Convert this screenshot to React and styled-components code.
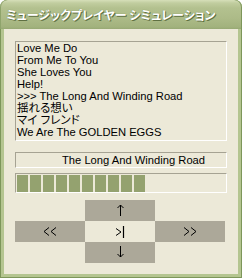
import React from "react";
import styled, { createGlobalStyle } from "styled-components";

const Global = createGlobalStyle`
  html, body { margin: 0; padding: 0; background: #ffffff; }
  body { width: 242px; height: 278px; overflow: hidden; }
`;

const Window = styled.div`
  width: 242px;
  height: 278px;
  box-sizing: border-box;
  display: flex;
  flex-direction: column;
  border-radius: 7px 7px 0 0;
  overflow: hidden;
  background: #93ab6c;
  padding: 0 1px 1px 1px;
  box-shadow: inset 0 0 0 1px #7d965a;
`;

const TitleBar = styled.div`
  height: 29px;
  flex: none;
  display: flex;
  align-items: center;
  padding-left: 6px;
  margin: 0 -1px;
  border-radius: 7px 7px 0 0;
  background: linear-gradient(
    to bottom,
    #d6dfb9 0px,
    #c1cd9f 3px,
    #b3c18f 8px,
    #adbb88 18px,
    #a2b27d 27px,
    #97a873 29px
  );
  box-shadow: inset 1px 0 0 #8fa46c, inset -1px 0 0 #7d965a;
`;

const Title = styled.span`
  font-family: "Noto Sans CJK JP", sans-serif;
  font-feature-settings: "palt";
  font-size: 12px;
  font-weight: 700;
  color: #ffffff;
  text-shadow: 1px 1px 0 #5f7042, 0 0 1px #6d7f4c;
`;

const Frame = styled.div`
  flex: 1;
  display: flex;
  border-left: 3px solid #b4c590;
  border-right: 3px solid #b4c590;
  border-bottom: 3px solid #b4c590;
`;

const Body = styled.div`
  flex: 1;
  background: #ece9d8;
  display: flex;
  flex-direction: column;
  padding: 12px 11px 0 11px;
`;

const Sunken = styled.div`
  box-sizing: border-box;
  border-top: 1px solid #a6a393;
  border-left: 1px solid #a6a393;
  border-right: 1px solid #ffffff;
  border-bottom: 1px solid #ffffff;
`;

const ListBox = styled(Sunken)`
  height: 100px;
  padding: 0 0 0 1px;
  display: flex;
  flex-direction: column;
`;

const Row = styled.div`
  height: 12px;
  line-height: 12px;
  font-family: "Liberation Sans", "Noto Sans CJK JP", sans-serif;
  font-feature-settings: "palt";
  font-size: ${(p) => (p.$jp ? "11.5px" : "11.2px")};
  color: #000;
  white-space: nowrap;
`;

const Display = styled(Sunken)`
  margin-top: 11px;
  height: 16px;
  display: flex;
  align-items: center;
  padding-left: 46px;
  font-family: "Liberation Sans", sans-serif;
  font-size: 11.2px;
  color: #000;
`;

const Progress = styled(Sunken)`
  margin-top: 5px;
  height: 20px;
  display: flex;
  gap: 2px;
  padding: 1px 0 1px 1px;
`;

const Block = styled.div`
  width: 11px;
  height: 17px;
  background: #94a26f;
`;

const Pad = styled.div`
  margin-top: 7px;
  display: grid;
  grid-template-columns: repeat(3, 70px);
  grid-template-rows: repeat(3, 21px);
`;

const Key = styled.div`
  background: ${(p) => (p.$plain ? "transparent" : "#aca899")};
  display: flex;
  align-items: center;
  justify-content: center;
  grid-column: ${(p) => p.$col};
  grid-row: ${(p) => p.$row};
`;

const songs = [
  ["Love Me Do"],
  ["From Me To You"],
  ["She Loves You"],
  ["Help!"],
  [">>> The Long And Winding Road"],
  ["揺れる想い", true],
  ["マイ フレンド", true],
  ["We Are The GOLDEN EGGS"],
];

const Arrow = ({ dir }) => (
  <svg width="7" height="13" viewBox="0 0 7 13">
    {dir === "up" ? (
      <path d="M3.5 1 V12 M0.5 4 L3.5 1 L6.5 4" stroke="#000" fill="none" strokeWidth="1" />
    ) : (
      <path d="M3.5 0 V11 M0.5 8 L3.5 11 L6.5 8" stroke="#000" fill="none" strokeWidth="1" />
    )}
  </svg>
);

const Chevrons = ({ dir }) => (
  <svg width="14" height="9" viewBox="0 0 14 9">
    {dir === "left" ? (
      <path d="M6 0.5 L1 4.5 L6 8.5 M13 0.5 L8 4.5 L13 8.5" stroke="#000" fill="none" strokeWidth="1" />
    ) : (
      <path d="M1 0.5 L6 4.5 L1 8.5 M8 0.5 L13 4.5 L8 8.5" stroke="#000" fill="none" strokeWidth="1" />
    )}
  </svg>
);

const PlayMark = () => (
  <svg width="10" height="14" viewBox="0 0 10 14">
    <path d="M1 3.5 L6 7 L1 10.5" stroke="#000" fill="none" strokeWidth="1" />
    <path d="M8.5 1 V13" stroke="#000" strokeWidth="1.2" />
  </svg>
);

export default function App() {
  return (
    <>
      <Global />
      <Window>
        <TitleBar>
          <Title>ミュージックプレイヤー シミュレーション</Title>
        </TitleBar>
        <Frame>
          <Body>
            <ListBox>
              {songs.map(([t, jp]) => (
                <Row key={t} $jp={jp}>
                  {t}
                </Row>
              ))}
            </ListBox>
            <Display>The Long And Winding Road</Display>
            <Progress>
              {Array.from({ length: 10 }).map((_, i) => (
                <Block key={i} />
              ))}
            </Progress>
            <Pad>
              <Key $col="2" $row="1">
                <Arrow dir="up" />
              </Key>
              <Key $col="1" $row="2">
                <Chevrons dir="left" />
              </Key>
              <Key $col="2" $row="2" $plain>
                <PlayMark />
              </Key>
              <Key $col="3" $row="2">
                <Chevrons dir="right" />
              </Key>
              <Key $col="2" $row="3">
                <Arrow dir="down" />
              </Key>
            </Pad>
          </Body>
        </Frame>
      </Window>
    </>
  );
}
